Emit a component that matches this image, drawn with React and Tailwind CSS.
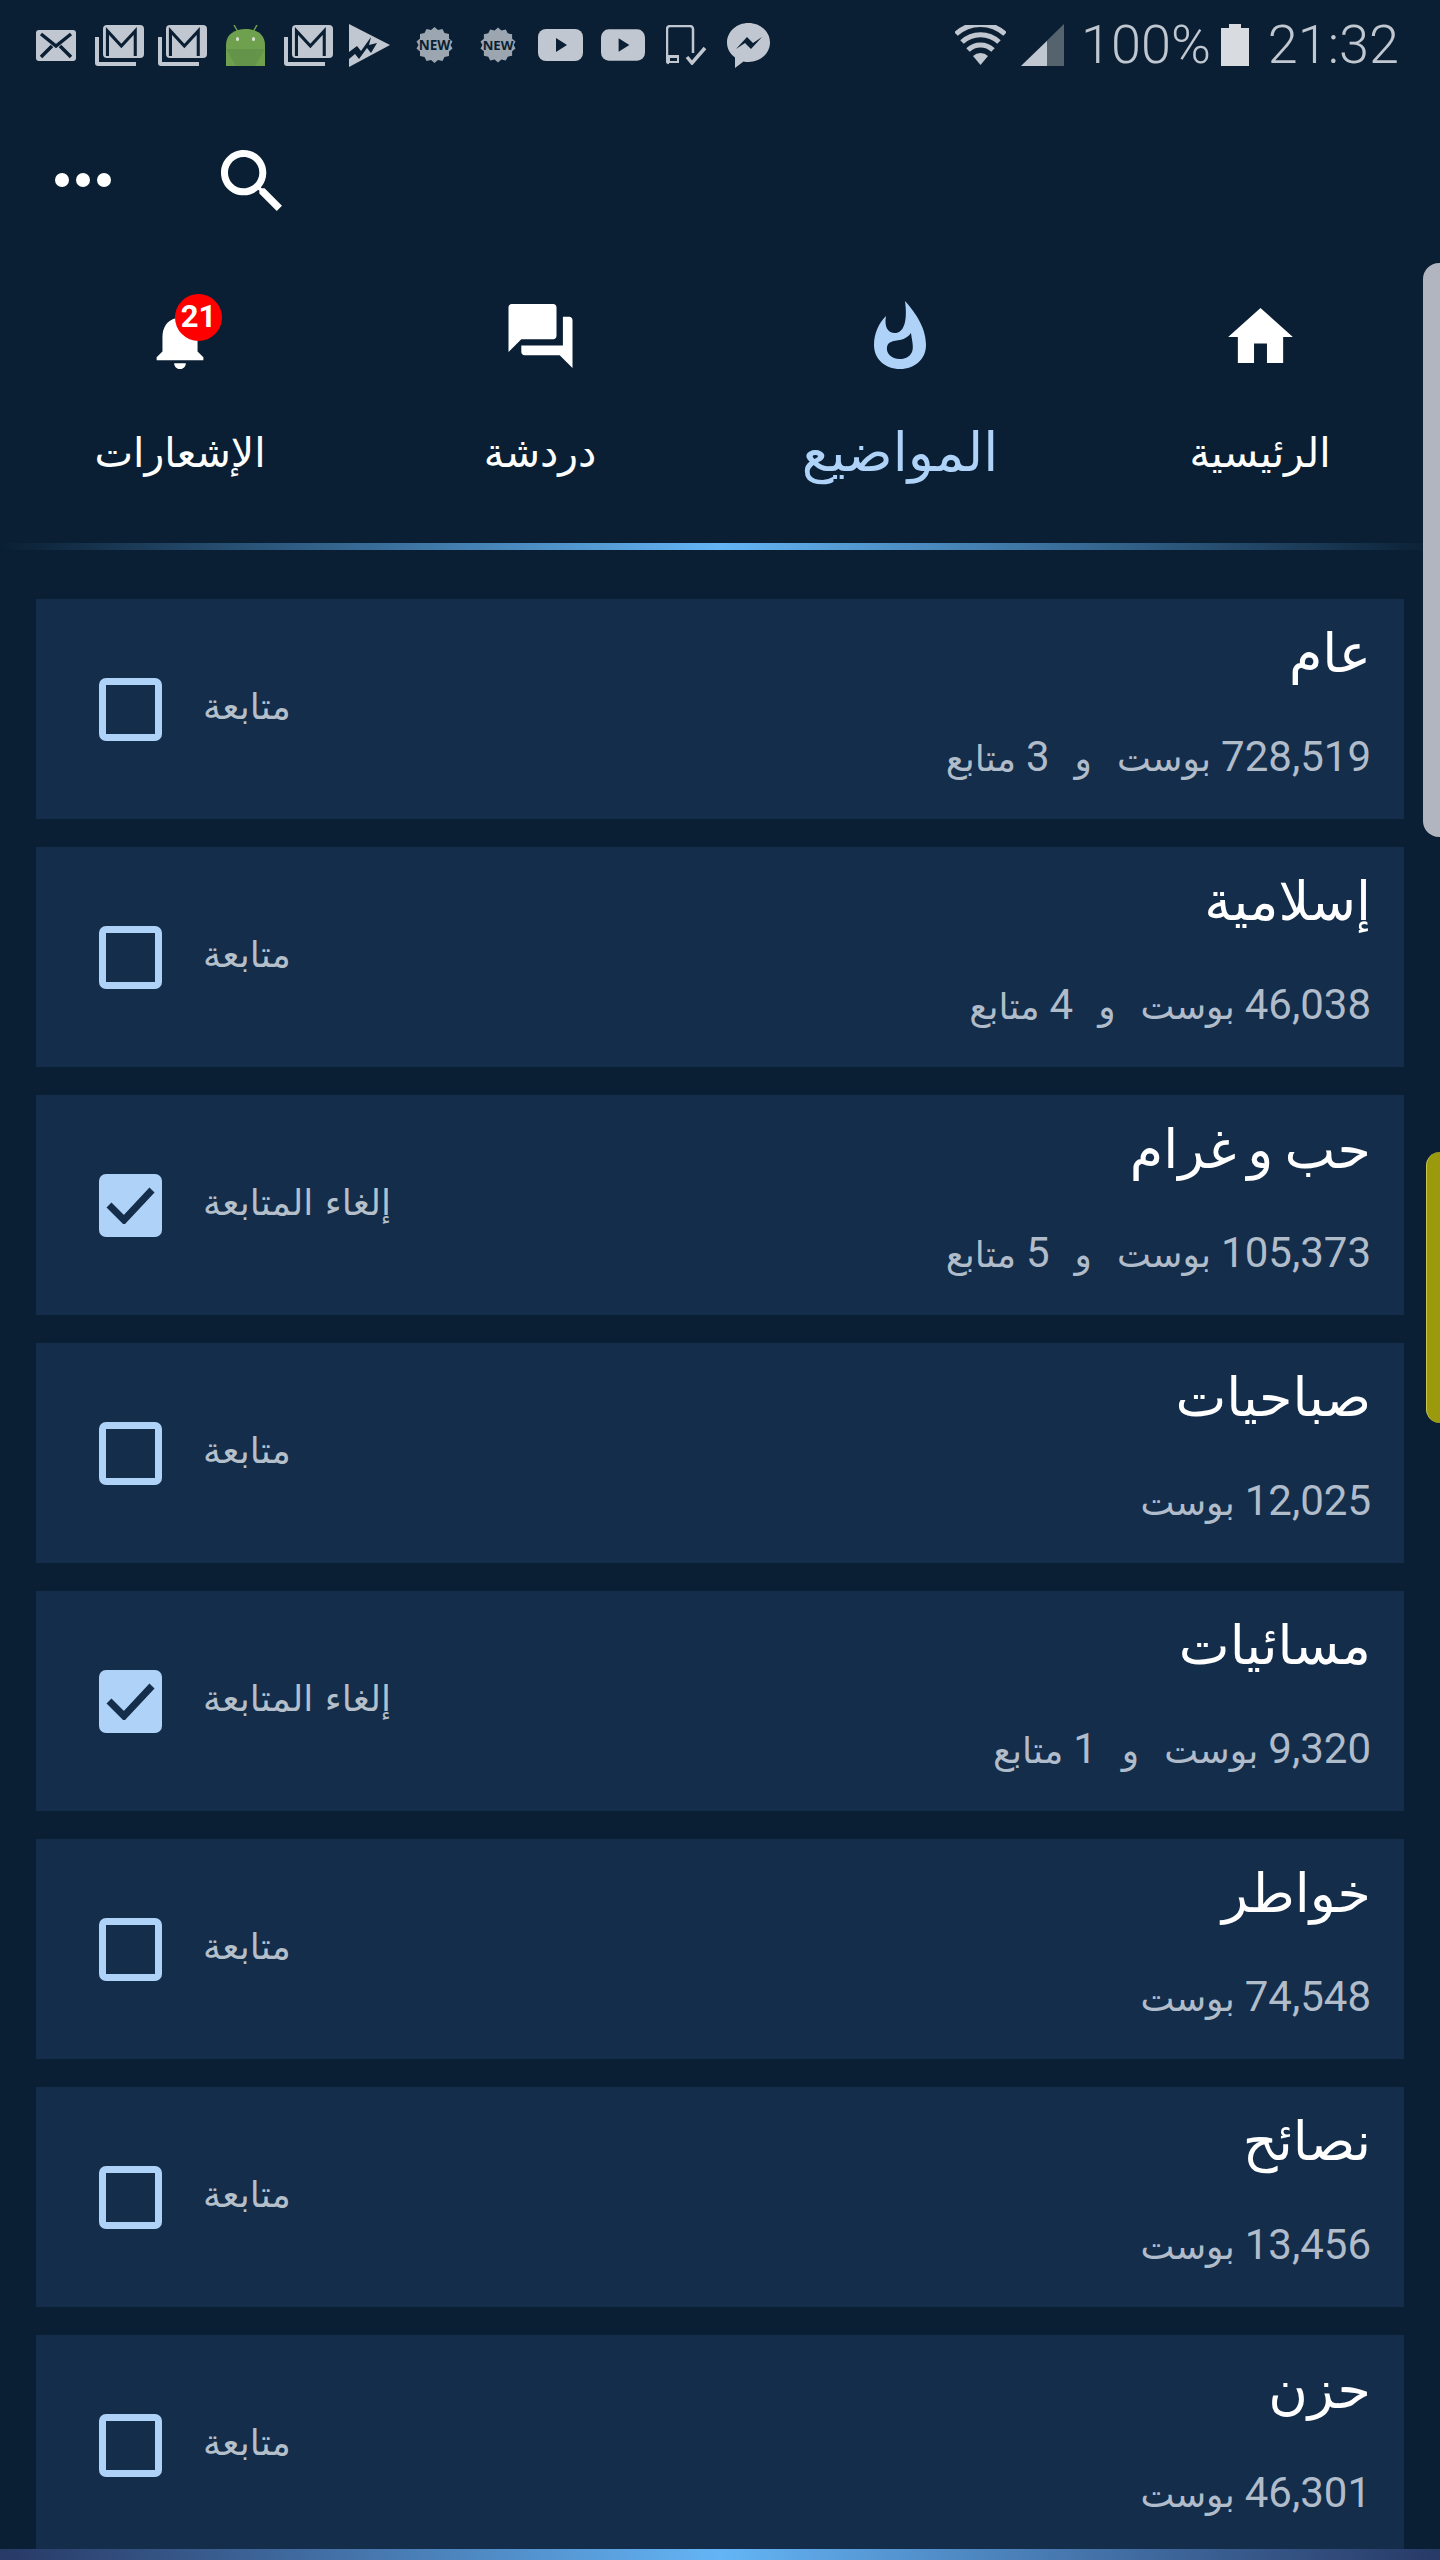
import React from 'react';

const topics = [
  { title: 'عام', posts: '728,519', followers: 3, following: false },
  { title: 'إسلامية', posts: '46,038', followers: 4, following: false },
  { title: 'حب و غرام', posts: '105,373', followers: 5, following: true },
  { title: 'صباحيات', posts: '12,025', following: false },
  { title: 'مسائيات', posts: '9,320', followers: 1, following: true },
  { title: 'خواطر', posts: '74,548', following: false },
  { title: 'نصائح', posts: '13,456', following: false },
  { title: 'حزن', posts: '46,301', following: false },
];

const GmailStack = ({ className }) => (
  <svg viewBox="0 0 49 41" className={className}>
    <path d="M0 12h4v25h37v4H3a3 3 0 0 1-3-3z" fill="#c0c7d0" />
    <rect x="8" y="0" width="41" height="33" rx="4" fill="#c0c7d0" />
    <path d="M15 31V6l13.500 15L42 6v25" stroke="#0a1f33" strokeWidth="3" fill="none" transform="translate(-3 0) scale(1.03 1)" />
  </svg>
);

const NewBadge = ({ className, fill }) => (
  <svg viewBox="0 0 37 36" className={className}>
    <path d="M18.500 0l3.500 3 4.500-1 2 4 4.500 1 0 4.500 3.500 3-2 3.500 2 3.500-3.500 3 0 4.500-4.500 1-2 4-4.500-1-3.500 3-3.500-3-4.500 1-2-4-4.500-1 0-4.500-3.500-3 2-3.500-2-3.500 3.500-3 0-4.500 4.500-1 2-4 4.500 1z" fill={fill} />
    <text x="18.500" y="23" textAnchor="middle" fontSize="13.500" fontWeight="700" fill="#0a1f33" fontFamily="'Open Sans', sans-serif">NEW</text>
  </svg>
);

const YouTube = ({ className }) => (
  <svg viewBox="0 0 45 32" className={className}>
    <rect width="45" height="32" rx="8" fill="#c0c7d0" />
    <path d="M18 9l11 7-11 7z" fill="#0a1f33" />
  </svg>
);

const StatusBar = () => (
  <div className="h-[90px] flex items-center justify-between pl-[36px] pr-[41px] text-[#c0c7d0] text-[54px] font-light font-['Roboto',sans-serif]">
    <div className="flex items-center">
      <svg viewBox="0 0 40 31" className="w-[40px] h-[31px] mt-[1px]">
        <rect width="40" height="31" rx="3" fill="#c0c7d0" />
        <path d="M5 4l15 12L35 4M5 27l11-11M35 27L24 16" stroke="#0a1f33" strokeWidth="3.500" fill="none" />
      </svg>
      <GmailStack className="w-[49px] h-[41px] ml-[19px]" />
      <GmailStack className="w-[49px] h-[41px] ml-[14px]" />
      <svg viewBox="0 0 39 41" className="w-[39px] h-[41px] ml-[19px]">
        <path d="M8 0l4 7M31 0l-4 7" stroke="#6ea04d" strokeWidth="1.500" />
        <path d="M0 41V20C0 9 9 4 19.500 4S39 9 39 20v21z" fill="#6ea04d" />
        <path d="M0 24h39L29 41H10z" fill="#64944a" />
        <rect x="10" y="12" width="3" height="4" rx="1.500" fill="#d7dfd0" />
        <rect x="26" y="12" width="3" height="4" rx="1.500" fill="#d7dfd0" />
      </svg>
      <GmailStack className="w-[49px] h-[41px] ml-[19px]" />
      <svg viewBox="0 0 41 43" className="w-[41px] h-[43px] ml-[16px]">
        <path d="M0 0l41 21L0 43z" fill="#c0c7d0" />
        <path d="M0 28l8-6 4 5 10-14-2 8 8-2-6 10-4-5-8 11-4-5-6 5z" fill="#0a1f33" />
      </svg>
      <NewBadge className="w-[37px] h-[36px] ml-[26px]" fill="#9ca6b0" />
      <NewBadge className="w-[36px] h-[36px] ml-[27px]" fill="#9ca6b0" />
      <YouTube className="w-[45px] h-[32px] ml-[22px]" />
      <YouTube className="w-[44px] h-[32px] ml-[18px]" />
      <svg viewBox="0 0 41 40" className="w-[41px] h-[40px] ml-[21px]">
        <path d="M3 38a2 2 0 0 1-2-2V4a3 3 0 0 1 3-3h20a3 3 0 0 1 3 3v24" stroke="#c0c7d0" strokeWidth="2.500" fill="none" />
        <path d="M1 30h12v8H3a2 2 0 0 1-2-2z" fill="#c0c7d0" />
        <path d="M4 33h7v3H4z" fill="#0a1f33" />
        <path d="M21 32l5 6 13-15" stroke="#c0c7d0" strokeWidth="3.500" fill="none" />
      </svg>
      <svg viewBox="0 0 43 45" className="w-[43px] h-[45px] ml-[20px]">
        <path d="M21.500 0C9.600 0 0 8.700 0 19.500 0 25.500 3 31 8 34.500V45l8.500-6.500c1.600.4 3.300.5 5 .5C33.400 39 43 30.300 43 19.500S33.400 0 21.500 0z" fill="#c0c7d0" />
        <path d="M9 26l11-12 6 6 9-6-11 12-6-6z" fill="#0a1f33" />
      </svg>
    </div>
    <div className="flex items-center">
      <svg viewBox="0 0 51 40" className="w-[51px] h-[40px]">
        <path d="M25.500 40L18 31a11 11 0 0 1 15 0z" fill="#c0c7d0" />
        <path d="M13 25a18 18 0 0 1 25 0M7 17a27 27 0 0 1 37 0M1 9a36 36 0 0 1 49 0" stroke="#c0c7d0" strokeWidth="5" fill="none" />
      </svg>
      <svg viewBox="0 0 43 42" className="w-[43px] h-[42px] ml-[15px]">
        <path d="M43 0v42H0z" fill="#55636f" />
        <path d="M26 17v25H0z" fill="#c0c7d0" />
      </svg>
      <span className="ml-[17px] leading-none">100%</span>
      <svg viewBox="0 0 28 42" className="w-[28px] h-[42px] ml-[10px]">
        <path d="M8 0h12v4h8v38H0V4h8z" fill="#d8dce0" />
      </svg>
      <span className="ml-[19px] leading-none">21:32</span>
    </div>
  </div>
);

const Toolbar = () => (
  <div className="h-[180px] flex items-center pl-[55px]">
    <div className="flex gap-[7px]">
      <span className="w-[14px] h-[14px] rounded-full bg-white" />
      <span className="w-[14px] h-[14px] rounded-full bg-white" />
      <span className="w-[14px] h-[14px] rounded-full bg-white" />
    </div>
    <svg viewBox="3 3 17.500 17.500" className="w-[61px] h-[61px] ml-[110px] fill-white">
      <path d="M15.500 14h-.79l-.28-.27C15.410 12.590 16 11.110 16 9.500 16 5.910 13.090 3 9.500 3S3 5.910 3 9.500 5.910 16 9.500 16c1.610 0 3.090-.59 4.230-1.570l.27.28v.79l5 4.990L20.490 19l-4.990-5zm-6 0C7.010 14 5 11.990 5 9.500S7.010 5 9.500 5 14 7.010 14 9.500 11.990 14 9.500 14z" />
    </svg>
  </div>
);

const TabLabel = ({ children, active }) => (
  <span dir="rtl" className={`mt-[54px] leading-[60px] ${active ? 'text-[54px] text-[#afd3f8]' : 'text-[41px] text-white'}`}>
    {children}
  </span>
);

const Tabs = () => (
  <div className="grid grid-cols-4 h-[273px] pt-[24px] font-['DejaVu_Sans',sans-serif]">
    <div className="flex flex-col items-center">
      <div className="h-[75px] flex items-end">
        <div className="relative">
          <svg viewBox="4 2.500 16 19.500" className="w-[52px] h-[57px] fill-white">
            <path d="M12 22c1.100 0 2-.9 2-2h-4c0 1.100.89 2 2 2zm6-6v-5c0-3.070-1.640-5.640-4.500-6.320V4c0-.83-.67-1.500-1.500-1.500s-1.500.67-1.500 1.500v.68C7.630 5.360 6 7.920 6 11v5l-2 2v1h16v-1l-2-2z" />
          </svg>
          <span className="absolute left-[21px] top-[-18px] w-[47px] h-[47px] rounded-full bg-[#ff0000] text-white text-[31px] font-bold flex items-center justify-center font-['Roboto',sans-serif]">21</span>
        </div>
      </div>
      <TabLabel>الإشعارات</TabLabel>
    </div>
    <div className="flex flex-col items-center">
      <div className="h-[75px] flex items-end">
        <svg viewBox="2 2 20 20" className="w-[65px] h-[64px] fill-white mb-[1px]">
          <path d="M21 6h-2v9H6v2c0 .55.45 1 1 1h11l4 4V7c0-.55-.45-1-1-1zm-4 6V3c0-.55-.45-1-1-1H3c-.55 0-1 .45-1 1v14l4-4h10c.55 0 1-.45 1-1z" />
        </svg>
      </div>
      <TabLabel>دردشة</TabLabel>
    </div>
    <div className="flex flex-col items-center">
      <div className="h-[75px] flex items-end">
        <svg viewBox="0 0 52 68" className="w-[52px] h-[68px] fill-[#afd3f8]">
          <path fillRule="evenodd" d="M31 0C38 8 52 24 52 44 52 58 41 68 26 68 11 68 0 58 0 44 0 32 5 22 12 15 10 26 14 32 21 32 29 32 34 22 31 0ZM37 32C38 40 40 46 38 51 35 57 30 58 26 58 17 58 12 52 13 46 14 40 20 40 26 39 31 38 35 35 37 32Z" />
        </svg>
      </div>
      <TabLabel active>المواضيع</TabLabel>
    </div>
    <div className="flex flex-col items-center">
      <div className="h-[75px] flex items-end">
        <svg viewBox="2 3 20 17" className="w-[65px] h-[55px] fill-white mb-[6px]">
          <path d="M10 20v-6h4v6h5v-8h3L12 3 2 12h3v8z" />
        </svg>
      </div>
      <TabLabel>الرئيسية</TabLabel>
    </div>
  </div>
);

const Checkbox = ({ checked }) =>
  checked ? (
    <span className="w-[63px] h-[63px] rounded-[7px] bg-[#afd3f8] flex items-center justify-center shrink-0">
      <svg viewBox="0 0 50 38" className="w-[50px] h-[38px]">
        <path d="M3 19l15 15L46 4" stroke="#132d4a" strokeWidth="7" fill="none" />
      </svg>
    </span>
  ) : (
    <span className="w-[63px] h-[63px] rounded-[7px] border-[7px] border-[#afd3f8] shrink-0" />
  );

const TopicCard = ({ topic }) => (
  <div className="h-[220px] shrink-0 bg-[#132d4a] flex items-center justify-between pl-[63px] pr-[33px]">
    <div className="flex items-center gap-[41px]">
      <Checkbox checked={topic.following} />
      <span dir="rtl" className="text-[36px] leading-none text-[#b4bfca] mb-[4px] font-['DejaVu_Sans',sans-serif]">
        {topic.following ? 'إلغاء المتابعة' : 'متابعة'}
      </span>
    </div>
    <div dir="rtl" className="flex flex-col items-start self-start pt-[20px]">
      <span className="text-[54px] leading-[70px] text-white [word-spacing:-6px] font-['DejaVu_Sans',sans-serif]">{topic.title}</span>
      <div className="mt-[43px] flex items-baseline gap-[10px] text-[36px] leading-[50px] text-[#b0bcca] font-['Roboto','DejaVu_Sans',sans-serif]">
        <span dir="ltr" className="text-[42px]">{topic.posts}</span>
        <span>بوست</span>
        {topic.followers !== undefined && (
          <>
            <span className="mx-[15px]">و</span>
            <span dir="ltr" className="text-[42px]">{topic.followers}</span>
            <span>متابع</span>
          </>
        )}
      </div>
    </div>
  </div>
);

export default function App() {
  return (
    <div className="relative w-[1440px] h-[2560px] overflow-hidden bg-[#0a1f33]">
      <StatusBar />
      <Toolbar />
      <Tabs />
      <div className="h-[7px] bg-linear-to-r from-transparent via-[#64b5f6] to-transparent" />
      <div className="flex flex-col gap-[28px] pl-[36px] pr-[36px] pt-[49px]">
        {topics.map((topic) => (
          <TopicCard key={topic.title} topic={topic} />
        ))}
      </div>

      <div className="absolute left-0 right-0 bottom-0 h-[11px] bg-linear-to-r from-[#283a66] via-[#64b5f6] to-[#283a66]" />
      <div className="absolute right-0 top-[263px] w-[17px] h-[574px] bg-[#b0b5bf] rounded-l-[16px]" />
      <div className="absolute right-0 top-[1152px] w-[14px] h-[271px] bg-[#9a9a0c] border-l border-[#c8c850] rounded-l-[14px]" />
    </div>
  );
}
